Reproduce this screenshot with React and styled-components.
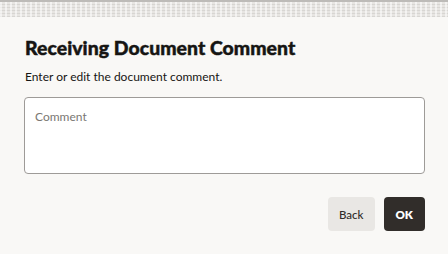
import styled, { createGlobalStyle } from "styled-components";

const GlobalStyle = createGlobalStyle`
  html, body {
    margin: 0;
    padding: 0;
    background: #f9f8f6;
  }
  body {
    font-family: Lato, "Noto Sans", sans-serif;
    color: #161513;
  }
`;

const Page = styled.div`
  width: 448px;
  height: 254px;
  display: flex;
  flex-direction: column;
  overflow: hidden;
`;

const Backdrop = styled.div`
  height: 17px;
  flex: none;
  border-top: 2px solid #bdbbb8;
  box-sizing: border-box;
  background-color: #e7e5e2;
  background-image:
    repeating-linear-gradient(90deg, rgba(255,255,255,0.55) 0 2px, transparent 2px 5px),
    repeating-linear-gradient(0deg, rgba(200,198,195,0.5) 0 1px, transparent 1px 3px);
`;

const Dialog = styled.section`
  flex: 1;
  background: #f9f8f6;
  border-radius: 6px 6px 0 0;
  padding: 19px 23px 0 24px;
  display: flex;
  flex-direction: column;
`;

const Title = styled.h1`
  margin: 0 0 0 1px;
  font-size: 19.4px;
  font-weight: 900;
  line-height: 24px;
  letter-spacing: 0.05px;
  -webkit-text-stroke: 0.45px #161513;
`;

const Subtitle = styled.p`
  margin: 9px 0 0 1px;
  font-size: 12px;
  line-height: 16px;
  color: #161513;
`;

const Comment = styled.textarea`
  margin-top: 12px;
  height: 77px;
  box-sizing: border-box;
  resize: none;
  border: 1px solid #9e9b98;
  border-radius: 4px;
  background: #fff;
  padding: 11px 10px;
  font-family: inherit;
  font-size: 12px;
  line-height: 16px;
  outline: none;
  &::placeholder {
    color: #7a7773;
  }
`;

const Actions = styled.div`
  margin-top: 23px;
  display: flex;
  justify-content: flex-end;
  gap: 9px;
`;

const Button = styled.button`
  height: 34px;
  padding: 0 ${(p) => (p.$primary ? "12px" : "11px")};
  border: none;
  border-radius: 4px;
  font-family: inherit;
  font-size: 11.5px;
  font-weight: ${(p) => (p.$primary ? 800 : 500)};
  background: ${(p) => (p.$primary ? "#312d2a" : "#e9e7e4")};
  color: ${(p) => (p.$primary ? "#ffffff" : "#312d2a")};
`;

export default function App() {
  return (
    <Page>
      <GlobalStyle />
      <Backdrop />
      <Dialog>
        <Title>Receiving Document Comment</Title>
        <Subtitle>Enter or edit the document comment.</Subtitle>
        <Comment placeholder="Comment" />
        <Actions>
          <Button>Back</Button>
          <Button $primary>OK</Button>
        </Actions>
      </Dialog>
    </Page>
  );
}
